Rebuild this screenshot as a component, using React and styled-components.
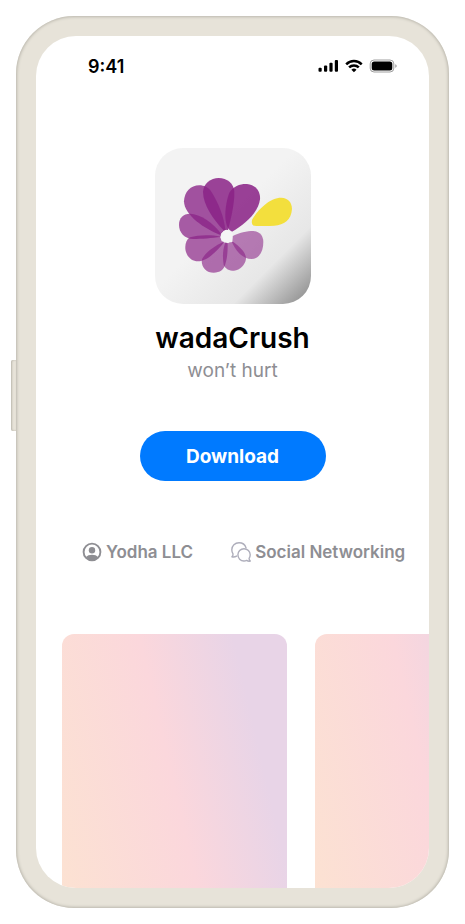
import React from 'react'
import styled, { createGlobalStyle } from 'styled-components';

const shell = '#e7e3d9';
const shellEdge = '#bab7ad';
const grey = '#8e8e93';
const blue = '#007aff';
const purple = '#892286';

const petals = [
  { opacity: 0.86, d: 'M258 275C228 262 237 192 250 158C262 138 284 131 303 132C328 134 344 154 342 178C338 214 302 250 258 275Z' },
  { opacity: 0.85, d: 'M232 270C204 240 171 196 171 155C173 130 194 114 218 114C243 114 264 131 265 155C266 190 255 235 246 270Z' },
  { opacity: 0.78, d: 'M221 284C178 268 114 226 114 184C115 156 134 136 160 136C174 136 187 142 196 155C216 185 235 232 238 270Z' },
  { opacity: 0.73, d: 'M224 291C200 294 165 297 142 297C115 296 99 277 99 254C99 234 112 221 132 221C162 222 202 248 226 282Z' },
  { opacity: 0.69, d: 'M223 290C196 284 158 284 132 292C121 299 117 312 118 327C121 350 137 364 156 364C184 364 216 330 234 307Z' },
  { opacity: 0.64, d: 'M230 307C205 318 170 344 167 362C167 384 183 398 203 398C222 398 234 389 238 372C245 350 245 330 245 309Z' },
  { opacity: 0.6, d: 'M238 308C229 330 230 356 233 374C238 387 250 392 264 392C282 390 298 374 300 356C300 336 280 320 262 306Z' },
  { opacity: 0.57, d: 'M259 289C278 278 304 273 322 273C341 274 352 288 352 306C352 333 341 356 317 357C292 357 271 337 258 307Z' },
];

export default function App() {
  return (
    <>
      <GlobalStyle />
      <Page>
        <Phone>
          <SideButton />
          <Screen>
            <StatusBar>
              <span>9:41</span>
              <StatusIcons />
            </StatusBar>
            <Hero>
              <AppIcon>
                <Flower />
              </AppIcon>
              <Title>wadaCrush</Title>
              <Subtitle>won’t hurt</Subtitle>
              <Download type="button">Download</Download>
            </Hero>
            <MetaRow>
              <Meta>
                <PersonIcon />
                Yodha LLC
              </Meta>
              <Meta>
                <ChatIcon />
                Social Networking
              </Meta>
            </MetaRow>
            <Previews>
              <Preview />
              <Preview />
            </Previews>
          </Screen>
        </Phone>
      </Page>
    </>
  )
}

function StatusIcons() {
  return (
    <svg width="80" height="14" viewBox="0 0 80 14" aria-hidden="true">
      <rect x="0.5" y="8.8" width="3.2" height="4" rx="1" />
      <rect x="6" y="6.5" width="3.2" height="6.3" rx="1" />
      <rect x="11.4" y="3.7" width="3.2" height="9.1" rx="1" />
      <rect x="16.8" y="1" width="3.2" height="11.8" rx="1" />
      <g fill="none" stroke="#000" strokeWidth="2.5">
        <path d="M28.2 5.3A11 11 0 0 1 43.7 5.3" />
        <path d="M31.1 8.4A6.9 6.9 0 0 1 40.8 8.4" />
      </g>
      <path d="M35.95 13.2L33.4 10.8A3.6 3.6 0 0 1 38.5 10.8Z" />
      <rect x="52.2" y="1" width="23.6" height="12" rx="3.8" fill="none" stroke="#000" strokeOpacity="0.38" />
      <path d="M77.3 5.2V8.8C78.1 8.5 78.7 7.8 78.7 7C78.7 6.2 78.1 5.5 77.3 5.2Z" fillOpacity="0.4" />
      <rect x="53.7" y="2.5" width="20.6" height="9" rx="2.5" />
    </svg>
  )
}

function Flower() {
  return (
    <svg width="100%" height="100%" viewBox="27 24 468 468" role="img" aria-label="wadaCrush logo">
      {petals.map((petal) => (
        <path key={petal.d} d={petal.d} fill={purple} fillOpacity={petal.opacity} />
      ))}
      <path d="M226 282L232 274L242 269L252 275L259 275L260 290L259 305L251 306L246 310L238 306L227 304L223 292Z" fill="#f5f5f5" />
      <path d="M319 238C332 214 369 173 406 173C426 174 438 186 438 207C436 240 414 255 385 257C364 259 340 258 323 257C317 253 316 245 319 238Z" fill="#f3df3d" />
    </svg>
  )
}

function PersonIcon() {
  return (
    <svg width="20" height="20" viewBox="0 0 20 20" aria-hidden="true">
      <circle cx="10" cy="10" r="8.4" fill="none" stroke={grey} strokeWidth="1.9" />
      <circle cx="10" cy="8.2" r="3.2" fill={grey} />
      <path d="M3.8 15.2C5.1 13.5 7.4 12.7 10 12.7C12.6 12.7 14.9 13.5 16.2 15.2C14.7 17.2 12.5 18.3 10 18.3C7.5 18.3 5.3 17.2 3.8 15.2Z" fill={grey} />
    </svg>
  )
}

function ChatIcon() {
  return (
    <svg width="20" height="20" viewBox="0 0 20 20" fill="none" stroke="#aeaebb" strokeWidth="1.4" strokeLinejoin="round" strokeLinecap="round" aria-hidden="true">
      <path d="M5.6 14.1C4.3 14.9 2.5 15.1 0.9 14.8C1.8 14 2.2 13 2 11.9C1.2 10.7 0.8 9.3 0.8 7.8C0.8 3.8 4 0.8 8 0.8C11.3 0.8 14.1 2.9 15 5.8" />
      <path d="M18.1 16.3C18.8 15.3 19.2 14.1 19.2 12.8C19.2 9.3 16.5 6.7 13 6.7C9.5 6.7 6.9 9.4 6.9 12.8C6.9 16.3 9.5 19 13 19C13.9 19 14.8 18.8 15.6 18.4C16.7 19.1 18 19.3 19.3 19.1C18.4 18.3 18 17.4 18.1 16.3Z" />
    </svg>
  )
}

const GlobalStyle = createGlobalStyle`
  * {
    box-sizing: border-box;
  }

  body {
    margin: 0;
    background: #fff;
    font-family: Inter, 'Liberation Sans', sans-serif;
    color: #000;
  }
`;

const Page = styled.div`
  display: flex;
  height: 100vh;
  padding: 16px;
`;

const Phone = styled.div`
  position: relative;
  flex: 1 1 auto;
  display: flex;
  min-width: 0;
  padding: 20px;
  border-radius: 58px;
  background: ${shell};
  box-shadow: inset 0 0 3px 1px ${shellEdge};
`;

const SideButton = styled.div`
  position: absolute;
  top: 344px;
  left: -5px;
  width: 5px;
  height: 71px;
  border-radius: 2px 0 0 2px;
  background: ${shell};
  box-shadow: inset 1px 0 2px ${shellEdge};
`;

const Screen = styled.main`
  flex: 1 1 auto;
  min-width: 0;
  overflow: hidden;
  border-radius: 40px;
  background: #fff;
`;

const StatusBar = styled.div`
  display: flex;
  align-items: center;
  justify-content: space-between;
  height: 60px;
  padding: 0 31px 0 52px;
  font-size: 18px;
  font-weight: 600;
`;

const Hero = styled.section`
  display: flex;
  flex-direction: column;
  align-items: center;
  padding-top: 52px;
`;

const AppIcon = styled.div`
  width: 156px;
  height: 156px;
  overflow: hidden;
  border-radius: 28px;
  background: linear-gradient(135deg, #f3f3f3 45%, #e7e7e7 75%, #858585 100%);
`;

const Title = styled.h1`
  margin: 16px 0 0;
  font-size: 28px;
  font-weight: 600;
  line-height: 36px;
`;

const Subtitle = styled.p`
  margin: 1px 0 0;
  font-size: 19px;
  line-height: 28px;
  color: ${grey};
`;

const Download = styled.button`
  width: 186px;
  height: 50px;
  margin-top: 46px;
  border: 0;
  border-radius: 25px;
  background: ${blue};
  color: #fff;
  font-family: inherit;
  font-size: 19px;
  font-weight: 700;
  cursor: pointer;
`;

const MetaRow = styled.div`
  display: flex;
  gap: 38px;
  padding: 59px 20px 0 46px;
`;

const Meta = styled.div`
  display: flex;
  align-items: center;
  gap: 4px;
  color: ${grey};
  font-size: 17px;
  font-weight: 600;
  line-height: 24px;
  white-space: nowrap;

  svg {
    flex-shrink: 0;
  }
`;

const Previews = styled.div`
  display: flex;
  gap: 28px;
  padding: 70px 0 0 26px;
`;

const Preview = styled.div`
  flex: 0 0 auto;
  width: 225px;
  height: 487px;
  border-radius: 12px;
  background: linear-gradient(77deg, #fce2d2 15%, #fbd7dc 56%, #e8d4e7 84%);
`;
